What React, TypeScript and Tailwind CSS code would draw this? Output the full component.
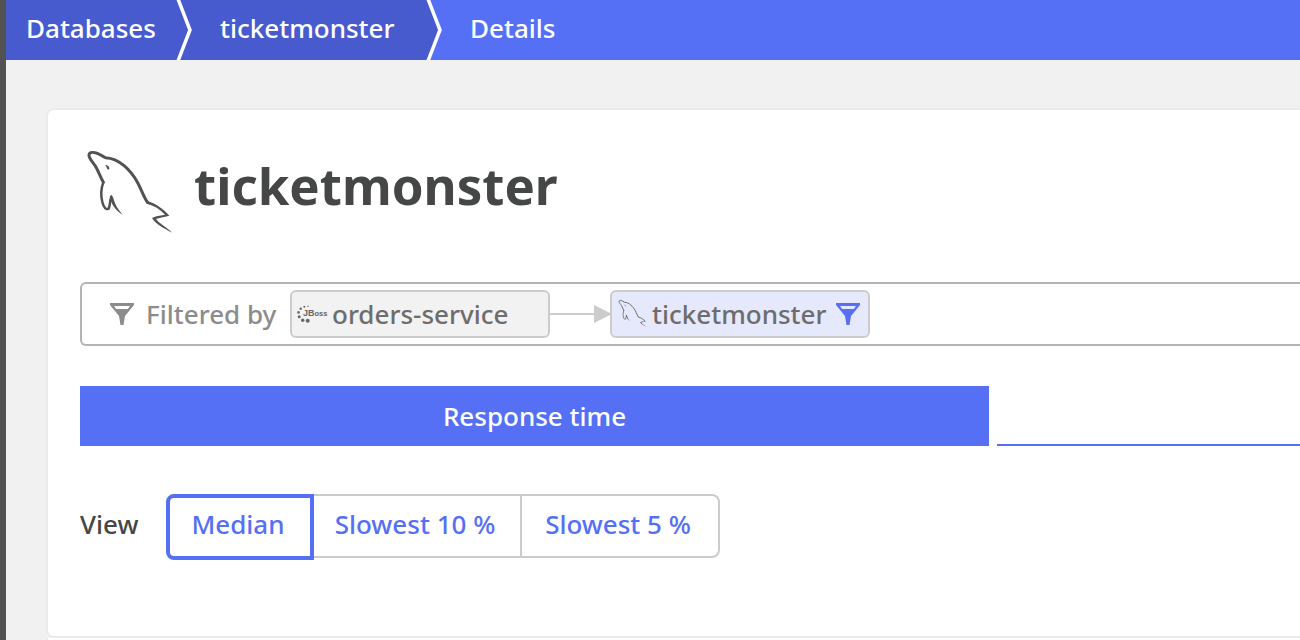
import { useState } from "react";

function Dolphin({ className }: { className: string }) {
  return (
    <svg viewBox="30 15 288 288" className={className} fill="none" stroke="currentColor" strokeLinecap="round" strokeLinejoin="round" aria-hidden="true">
      <path strokeWidth="9" d="M100 127C92 113 86 96 79 83C70 67 58 58 57 46C57 37 66 36 76 38C88 40 95 49 106 53C148 54 184 93 203 128C216 152 223 175 232 186" />
      <path strokeWidth="7.5" d="M100 127C92 148 93 170 97 186C101 204 109 210 116 206C121 196 118 184 124 172" />
      <path fill="currentColor" stroke="none" d="M229 182C255 188 280 206 298 227C280 231 268 233 258 237C266 250 292 262 306 278C284 266 258 254 246 234C262 226 276 226 285 224C270 207 252 196 230 191Z" />
      <path fill="currentColor" stroke="none" d="M119 170L124 164L129 172C134 192 144 210 158 224C142 216 128 198 123 184Z" />
      <path fill="currentColor" stroke="none" d="M106 75C113 75 119 80 118 87C114 91 110 87 110 82Z" />
    </svg>
  );
}

function Funnel({ className }: { className: string }) {
  return (
    <svg viewBox="0 0 24 22" className={className} fill="currentColor" fillRule="evenodd" aria-hidden="true">
      <path d="M0 0H24V2L15 13L13.5 22H10.5L9 13L0 2ZM4 3L6.2 6H17.8L20 3Z" />
    </svg>
  );
}

function JBoss() {
  return (
    <svg viewBox="0 0 31 20" className="h-5 w-[31px] shrink-0 text-[#666]" fill="currentColor" role="img" aria-label="JBoss">
      <circle cx="11" cy="2.3" r="0.7" />
      <circle cx="7.3" cy="2.7" r="1" />
      <circle cx="3.7" cy="4.7" r="1.2" />
      <circle cx="1.5" cy="8.4" r="1.3" />
      <circle cx="2.2" cy="12.8" r="1.5" />
      <circle cx="5.7" cy="16.2" r="1.7" />
      <circle cx="10.7" cy="16.7" r="2" />
      <text x="6" y="12" fontFamily="Liberation Sans, sans-serif" fontWeight="700" fontSize="9">
        JB<tspan fontSize="7.5">oss</tspan>
      </text>
    </svg>
  );
}

function Chevron() {
  return (
    <svg viewBox="0 0 16 60" className="h-[60px] w-4 shrink-0" aria-hidden="true">
      <path d="M0 0H2L14 30L2 60H0Z" fill="#475ace" />
      <path d="M2 -1L14 30L2 61" fill="none" stroke="#fff" strokeWidth="3.5" />
    </svg>
  );
}

const views = ["Median", "Slowest 10 %", "Slowest 5 %"];
const viewStyles = [
  "w-[148px] rounded-l-lg pr-1",
  "w-[208px] pr-1",
  "w-[198px] rounded-r-lg pr-1",
];
const idleBorders = [
  "h-16 border-y-2 border-x-2 border-[#ccc]",
  "h-16 border-y-2 border-r-2 border-[#ccc]",
  "h-16 border-y-2 border-r-2 border-[#ccc]",
];

export default function App() {
  const [view, setView] = useState(0);
  const [tab, setTab] = useState(0);

  return (
    <div className="flex min-h-screen overflow-hidden bg-[#f1f1f1] font-['Noto_Sans',sans-serif] text-[26px] font-medium leading-9 text-[#454646]">
      <aside className="w-1.5 shrink-0 bg-[#525252]" />
      <div className="flex min-w-0 grow flex-col">
        <nav aria-label="Breadcrumb" className="flex h-[60px] items-center bg-[#5570f5] text-white">
          <a href="#databases" className="flex h-full w-[170px] items-center bg-[#475ace] pb-1 pl-5">Databases</a>
          <div className="bg-[#475ace]"><Chevron /></div>
          <a href="#ticketmonster" className="flex h-full w-[234px] items-center bg-[#475ace] pb-1 pl-7">ticketmonster</a>
          <Chevron />
          <span className="pb-1 pl-7">Details</span>
        </nav>

        <main className="flex grow flex-col pl-10 pt-12">
          <section className="rounded-l-lg border-2 border-r-0 border-[#ebebeb] bg-white pb-[76px] pl-8 pt-8">
            <header className="flex h-[108px] items-start gap-[18px] pt-[3px]">
              <Dolphin className="size-24 shrink-0 text-[#525252]" />
              <h1 className="pt-2 text-[51px] font-bold leading-[64px]">ticketmonster</h1>
            </header>

            <div className="mt-8 flex h-16 items-center rounded-l-md border-2 border-r-0 border-[#b4b4b4] pl-7 text-[#8c8c8c]">
              <Funnel className="h-[22px] w-6 shrink-0" />
              <span className="w-[156px] shrink-0 pl-3">Filtered by</span>
              <div className="flex h-12 w-[260px] shrink-0 items-center gap-1 rounded-md border-2 border-[#ccc] bg-[#f2f2f2] pl-[5px] text-[#6d6d6d]">
                <JBoss />
                <span>orders-service</span>
              </div>
              <svg viewBox="0 0 60 20" className="h-5 w-[60px] shrink-0" fill="#ccc" aria-hidden="true">
                <path d="M0 9H44V1L60 9H60V11L44 19V11H0Z" />
              </svg>
              <div className="flex h-12 w-[260px] shrink-0 items-center rounded-md border-2 border-[#ccc] bg-[#e6e9fc] pl-1 text-[#6d6d6d]">
                <Dolphin className="size-8 shrink-0" />
                <span className="w-[188px] pl-1">ticketmonster</span>
                <Funnel className="h-[22px] w-6 shrink-0 text-[#5570f5]" />
              </div>
            </div>

            <div role="tablist" className="mt-10 grid grid-cols-[3fr_1fr] gap-2">
              {["Response time", ""].map((label, i) => (
                <button
                  key={i}
                  role="tab"
                  aria-selected={tab === i}
                  onClick={() => setTab(i)}
                  className={tab === i ? "h-[60px] bg-[#5570f5] text-white" : "h-[60px] border-b-2 border-[#5570f5] text-[#5570f5]"}
                >
                  {label}
                </button>
              ))}
            </div>

            <div className="mt-12 flex items-start">
              <span id="view-label" className="w-[86px] shrink-0 pt-3">View</span>
              <div role="group" aria-labelledby="view-label" className="flex h-[66px] items-start text-[#5570f5]">
                {views.map((label, i) => (
                  <button
                    key={label}
                    aria-pressed={view === i}
                    onClick={() => setView(i)}
                    className={`flex shrink-0 items-center justify-center ${viewStyles[i]} ${view === i ? "h-[66px] border-4 border-[#5570f5] pb-1.5" : `pb-1 ${idleBorders[i]}`}`}
                  >
                    {label}
                  </button>
                ))}
              </div>
            </div>
          </section>
          <section className="grow rounded-tl-lg border-l-2 border-[#ebebeb] bg-white" />
        </main>
      </div>
    </div>
  );
}
